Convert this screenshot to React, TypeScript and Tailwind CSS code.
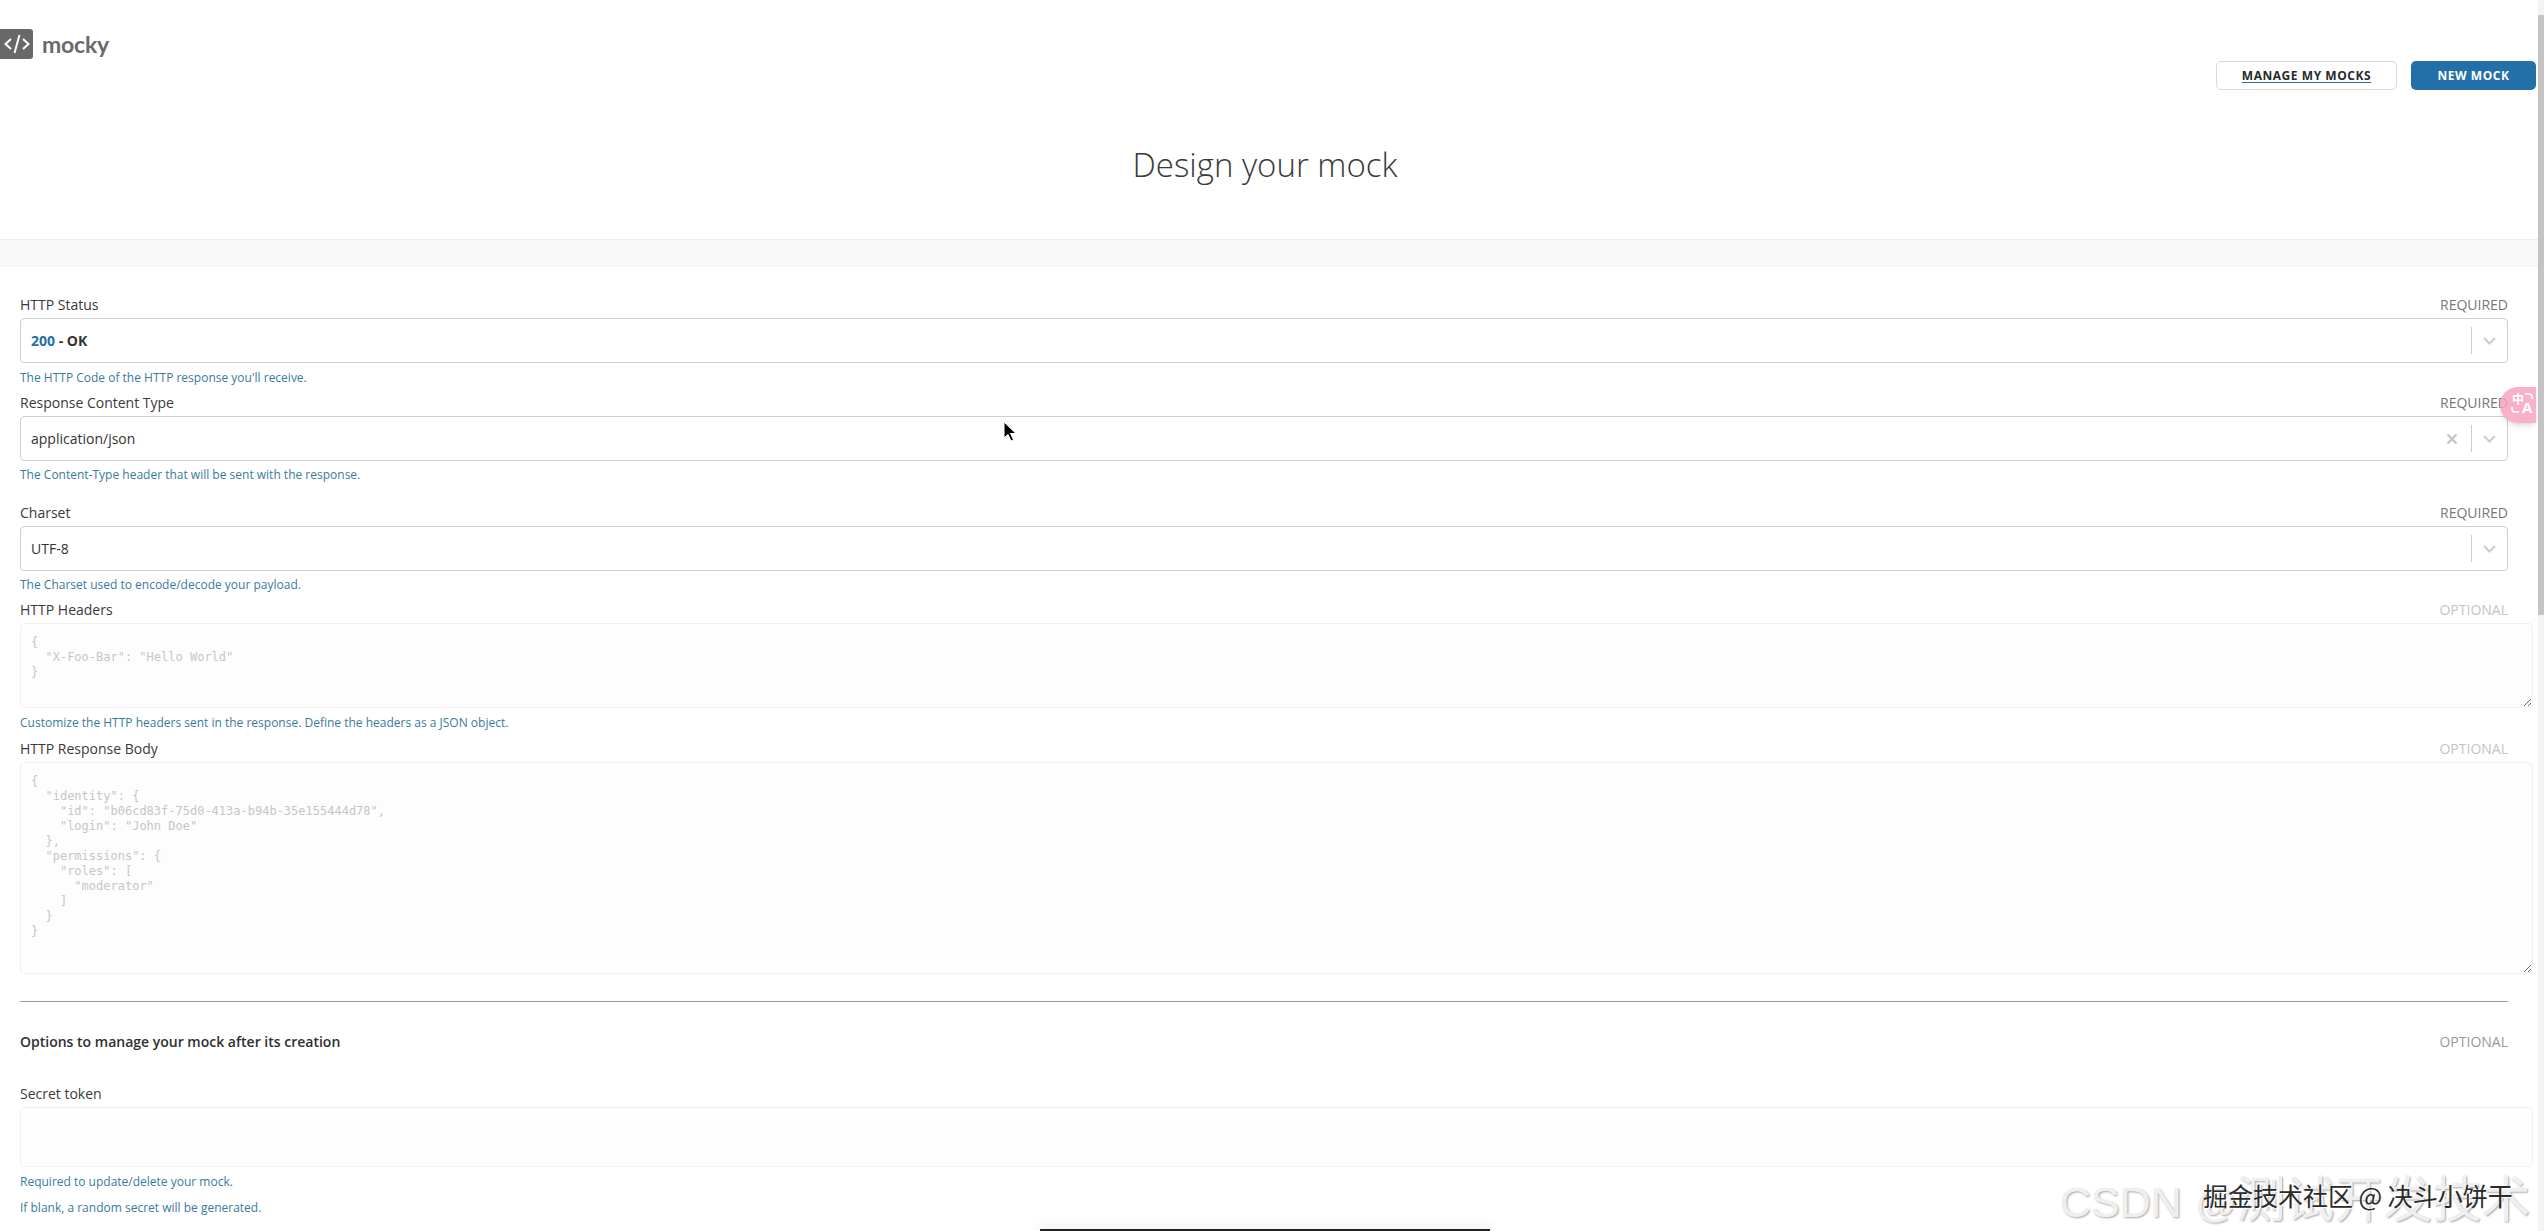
import React from 'react';

const BODY_PLACEHOLDER = `{
  "identity": {
    "id": "b06cd83f-75d0-413a-b94b-35e155444d78",
    "login": "John Doe"
  },
  "permissions": {
    "roles": [
      "moderator"
    ]
  }
}`;

const HEADERS_PLACEHOLDER = `{
  "X-Foo-Bar": "Hello World"
}`;

const Hint: React.FC<{ children: React.ReactNode; className?: string }> = ({ children, className }) => (
  <p className={`h-4 text-[12px] leading-4 text-[#3a7a9e] ${className ?? ''}`}>{children}</p>
);

const Label: React.FC<{ name: string; tag: string; muted?: boolean }> = ({ name, tag, muted }) => (
  <div className="flex h-[22px] mb-[2px] items-center justify-between mr-[25px] text-[14px] leading-5 text-[#3a3a3a]">
    <span>{name}</span>
    <span className={muted ? 'text-[#c4c4c4]' : 'text-[#777777]'}>{tag}</span>
  </div>
);

const Chevron = () => (
  <svg width="13" height="8" viewBox="0 0 13 8" fill="none" stroke="#cccccc" strokeWidth="2">
    <path d="M1 1 6.500 6.500 12 1" />
  </svg>
);

const SelectBox: React.FC<{ clearable?: boolean; children: React.ReactNode }> = ({ clearable, children }) => (
  <div className="flex h-[45px] mr-[25px] items-center rounded border border-[#cfcfcf] bg-white pl-[10px] text-[14px] text-[#333333]">
    <div className="flex-1">{children}</div>
    {clearable && (
      <svg width="10" height="10" viewBox="0 0 10 10" stroke="#c4c4c4" strokeWidth="2.2" className="mr-[14px]">
        <path d="M0.5 0.5 9.5 9.500M9.5 0.5 0.5 9.500" />
      </svg>
    )}
    <div className="h-[27px] w-px bg-[#cccccc]" />
    <div className="flex w-[35px] justify-center">
      <Chevron />
    </div>
  </div>
);

const CodeArea: React.FC<{ placeholder: string; height: string }> = ({ placeholder, height }) => (
  <textarea
    readOnly
    placeholder={placeholder}
    className={`block w-full ${height} rounded border border-[#f1f1f1] bg-[#fdfdfd] px-[10px] py-[11px] font-['DejaVu_Sans_Mono',monospace] text-[12px] leading-[15px] placeholder:text-[#c6c6c6]`}
  />
);

export default function App() {
  return (
    <div className="relative flex h-[1231px] overflow-hidden bg-white font-['Open_Sans',sans-serif]">
      <main className="min-w-0 flex-1">
        <header className="h-[240px] border-b border-[#ececec]">
          <div className="flex items-start justify-between pr-[2px]">
            <div className="mt-[29px] flex items-center gap-[9px]">
              <div className="flex h-[30px] w-[33px] items-center justify-center rounded-r-[3px] bg-[#686868]">
                <svg width="26" height="24" viewBox="0 0 26 24" fill="none" stroke="white" strokeWidth="2">
                  <path d="M7 7 1.500 12 7 17M19 7 24.500 12 19 17M15.500 3 10.500 21" />
                </svg>
              </div>
              <span className="font-['Lato',sans-serif] text-[23px] font-bold leading-[30px] tracking-[-0.2px] text-[#6a6a6a]">mocky</span>
            </div>
            <div className="mt-[61px] flex gap-[14px]">
              <button className="h-[29px] w-[181px] rounded-[5px] border border-[#d8d8d8] bg-white text-[12px] font-bold uppercase tracking-[0.55px] text-[#2a2a2a] underline underline-offset-2 decoration-[#2270a7]">
                Manage my mocks
              </button>
              <button className="h-[29px] w-[125px] rounded-[5px] bg-[#2270a7] text-[12px] font-bold uppercase tracking-[0.55px] text-white">
                New mock
              </button>
            </div>
          </div>
          <h1 className="mt-[53px] pr-[8px] text-center text-[33px] font-light leading-[44px] text-[#3a3a3a]">Design your mock</h1>
        </header>

        <div className="h-[26px] border-b border-[#f0f0f0] bg-[#f9f9f9]" />

        <form className="pl-5 pr-[5px] pt-[28px]">
          <Label name="HTTP Status" tag="REQUIRED" />
          <SelectBox>
            <span className="font-bold">
              <span className="text-[#2270a7]">200</span> - OK
            </span>
          </SelectBox>
          <Hint className="mt-[7px]">The HTTP Code of the HTTP response you'll receive.</Hint>

          <div className="mt-[6px]">
            <Label name="Response Content Type" tag="REQUIRED" />
            <SelectBox clearable>application/json</SelectBox>
            <Hint className="mt-[6px]">The Content-Type header that will be sent with the response.</Hint>
          </div>

          <div className="mt-[19px]">
            <Label name="Charset" tag="REQUIRED" />
            <SelectBox>UTF-8</SelectBox>
            <Hint className="mt-[6px]">The Charset used to encode/decode your payload.</Hint>
          </div>

          <div className="mt-[6px]">
            <Label name="HTTP Headers" tag="OPTIONAL" muted />
            <CodeArea placeholder={HEADERS_PLACEHOLDER} height="h-[85px]" />
            <Hint className="mt-[7px]">Customize the HTTP headers sent in the response. Define the headers as a JSON object.</Hint>
          </div>

          <div className="mt-[7px]">
            <Label name="HTTP Response Body" tag="OPTIONAL" muted />
            <CodeArea placeholder={BODY_PLACEHOLDER} height="h-[212px]" />
          </div>

          <hr className="mr-[25px] mt-[27px] border-t border-[#9a9a9a]" />

          <div className="mt-[30px] mr-[25px] flex h-5 items-center justify-between text-[14px] leading-5">
            <span className="font-semibold text-[#2f2f2f]">Options to manage your mock after its creation</span>
            <span className="text-[#999999]">OPTIONAL</span>
          </div>

          <div className="mt-[31px]">
            <div className="mb-[2px] flex h-[22px] items-center text-[14px] leading-5 text-[#3a3a3a]">Secret token</div>
            <input readOnly className="block h-[60px] w-full rounded border border-[#f1f1f1] bg-[#fdfdfd]" />
            <Hint className="mt-[7px]">Required to update/delete your mock.</Hint>
            <Hint className="mt-[10px]">If blank, a random secret will be generated.</Hint>
          </div>
        </form>
      </main>

      <aside className="w-[6px] bg-[#f3f3f3] pt-[15px]">
        <div className="h-[600px] bg-[#c4c4c4]" />
      </aside>

      {/* translate bubble */}
      <div className="absolute left-[2500px] top-[387px] h-[36px] w-[36px] rounded-l-full bg-[#f7a3c0]/85 shadow-md">
        <span className="absolute left-[12px] top-[6px] font-['Noto_Sans_CJK_SC',sans-serif] text-[12px] font-bold leading-[12px] text-white">中</span>
        <span className="absolute left-[22px] top-[13px] text-[15px] font-bold leading-[15px] text-white">A</span>
        <svg className="absolute left-[11px] top-[5px]" width="24" height="26" viewBox="0 0 24 26" fill="none" stroke="white" strokeWidth="1.5">
          <path d="M14 2h4a3 3 0 0 1 3 3v2M1 15v2a3 3 0 0 0 3 3h4" />
        </svg>
      </div>

      {/* mouse cursor */}
      <svg className="absolute left-[1003px] top-[421px]" width="14" height="22" viewBox="0 0 14 22">
        <path d="M1 1v16l4-3.500 3 6.500 2.500-1.200-3-6.300h5.500z" fill="black" stroke="white" strokeWidth="1" />
      </svg>

      {/* video watermarks */}
      <div className="absolute left-[2060px] top-[1172px] flex items-baseline whitespace-nowrap font-['Liberation_Sans','Noto_Sans_CJK_SC',sans-serif] text-[#efefef] [text-shadow:1px_1px_2px_#a8a8a8]">
        <span className="text-[43px] leading-[56px]">CSDN</span>
        <span className="ml-[14px] text-[40px] leading-[56px]">@</span>
        <span className="text-[49px] leading-[56px]">测试开发技术</span>
      </div>
      <div className="absolute left-[2203px] top-[1178px] whitespace-nowrap font-['Noto_Sans_CJK_SC',sans-serif] text-[25px] leading-[34px] text-[#2a2a2a] [text-shadow:1px_1px_0_#ffffff]">
        掘金技术社区 @ 决斗小饼干
      </div>

      {/* player progress bar */}
      <div className="absolute bottom-0 left-[1040px] h-[2px] w-[450px] bg-[#222222] shadow-[0_-2px_12px_rgba(0,0,0,0.25)]" />
    </div>
  );
}
